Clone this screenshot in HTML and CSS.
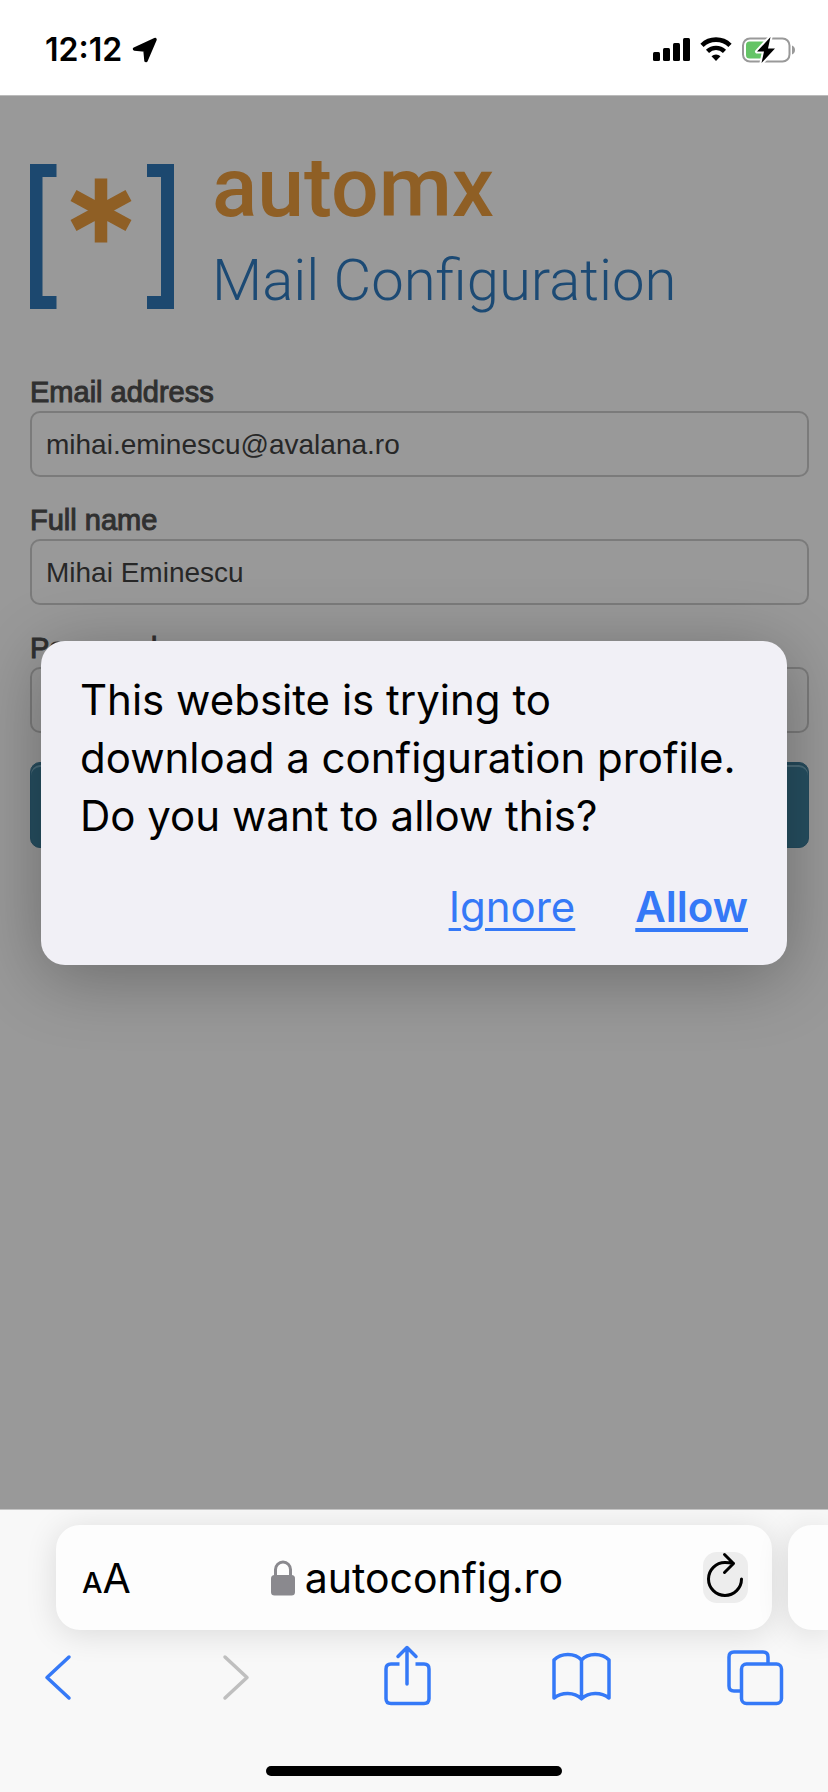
FILE: index.html
```html
<!DOCTYPE html>
<html lang="en">
<head>
<meta charset="utf-8">
<meta name="viewport" content="width=device-width, initial-scale=1">
<title>automx Mail Configuration</title>
<link rel="stylesheet" href="styles.css">
</head>
<body>
<header class="status">
  <div class="status-left">
    <span class="time">12:12</span>
    <svg class="location" viewBox="0 0 26 26" width="26" height="26" aria-hidden="true"><path d="M2.500 12 23 2.500 14 23.500 13 13Z" fill="#000" stroke="#000" stroke-width="3.500" stroke-linejoin="round"/></svg>
  </div>
  <div class="status-right">
    <svg viewBox="0 0 37 26" width="37" height="26" aria-hidden="true">
      <rect x="0" y="15" width="7" height="9" rx="1.500"/><rect x="10" y="11" width="7" height="13" rx="1.500"/><rect x="20" y="6" width="7" height="18" rx="1.500"/><rect x="30" y="1" width="7" height="23" rx="1.500"/>
    </svg>
    <svg viewBox="0 0 32 26" width="32" height="26" aria-hidden="true">
      <path d="M2 8.300a20 20 0 0 1 28 0" fill="none" stroke="#000" stroke-width="4.600"/>
      <path d="M7.500 14.300a12.200 12.200 0 0 1 17 0" fill="none" stroke="#000" stroke-width="4.400"/>
      <path d="M11.500 19.200a6.500 6.500 0 0 1 9 0L16 24Z"/>
    </svg>
    <svg viewBox="0 0 54 26" width="54" height="26" aria-hidden="true">
      <rect x="1" y="1.500" width="46.500" height="23" rx="7" fill="none" stroke="#999" stroke-width="2"/>
      <path d="M50 8.500c4 1.500 4 7.500 0 9Z" fill="#999"/>
      <rect x="4" y="4.500" width="20" height="17" rx="3.500" fill="#65c466"/>
      <path d="M28.500 0 15 14.500h7L19.500 26 33 11.500h-7Z" fill="#000" stroke="#fff" stroke-width="4" paint-order="stroke" stroke-linejoin="round"/>
    </svg>
  </div>
</header>

<main class="page">
  <div class="brand">
    <svg class="brand-mark" viewBox="0 0 144 145" width="144" height="145" aria-hidden="true">
      <path d="M0 0h26.500v13H12.500v119h14v13H0ZM144 0h-27v13h14v119h-14v13h27Z" fill="#1c486f"/>
      <path d="M71 14.500v64M43.500 31.500l55 30M98.500 31.500l-55 30" fill="none" stroke="#8f5f25" stroke-width="12.500"/>
    </svg>
    <div class="brand-text">
      <span class="brand-name">automx</span>
      <span class="brand-sub">Mail Configuration</span>
    </div>
  </div>
  <form class="form">
    <div class="field">
      <label for="email">Email address</label>
      <input id="email" type="text" value="mihai.eminescu@avalana.ro">
    </div>
    <div class="field">
      <label for="name">Full name</label>
      <input id="name" type="text" value="Mihai Eminescu">
    </div>
    <div class="field">
      <label for="password">Password</label>
      <input id="password" type="password">
    </div>
    <button class="submit" type="button" aria-label="Submit"></button>
  </form>

  <div class="overlay">
    <div class="dialog" role="dialog" aria-labelledby="message">
      <p id="message" class="message">This website is trying to download a configuration profile. Do you want to allow this?</p>
      <div class="actions">
        <a href="#ignore">Ignore</a>
        <a class="primary" href="#allow">Allow</a>
      </div>
    </div>
  </div>
</main>

<footer class="browser">
  <div class="tabs">
    <div class="address">
      <button class="reader" type="button" aria-label="Page settings"><span class="small-a">A</span><span class="large-a">A</span></button>
      <div class="url">
        <svg viewBox="0 0 24 36" width="24" height="36" aria-hidden="true"><path d="M4.500 17V9.500a7.500 7.500 0 0 1 15 0V17" fill="none" stroke="#8a898e" stroke-width="3"/><rect y="15" width="24" height="20.500" rx="3.500" fill="#8a898e"/></svg>
        <span>autoconfig.ro</span>
      </div>
      <button class="reload" type="button" aria-label="Reload">
        <svg viewBox="0 0 45 51" width="45" height="51" fill="none" stroke="#000" stroke-width="3" stroke-linecap="round" stroke-linejoin="round" aria-hidden="true"><path d="M38.500 27A16.500 16.500 0 1 1 22 10.500q4 0 8.500 1M21.500 2.500l9 9-9 9"/></svg>
      </button>
    </div>
    <div class="next-tab"></div>
  </div>
  <nav class="toolbar">
    <button type="button" aria-label="Back"><svg viewBox="0 0 64 64" width="64" height="64"><path d="M44 14 22 34.500 44 55"/></svg></button>
    <button class="inactive" type="button" aria-label="Forward"><svg viewBox="0 0 64 64" width="64" height="64"><path d="M25 14 47 34.500 25 55"/></svg></button>
    <button type="button" aria-label="Share"><svg viewBox="0 0 64 64" width="64" height="64"><path d="M33 41V5M24 13.500 33 4.500l9 9"/><path stroke-linecap="butt" d="M25.500 21H17q-5 0-5 5v29.500q0 5 5 5h33q5 0 5-5V26q0-5-5-5h-8.500"/></svg></button>
    <button type="button" aria-label="Bookmarks"><svg viewBox="0 0 64 64" width="64" height="64"><path d="M32.500 17C26 9.500 12 9.500 5 17v38c8-6 20-6 27.500.8C40 49 52 49 60 55V17C53 9.500 39 9.500 32.500 17v38.800"/></svg></button>
    <button type="button" aria-label="Tabs"><svg viewBox="0 0 64 64" width="64" height="64"><rect x="18.500" y="21" width="40" height="39.500" rx="5"/><path stroke-linecap="butt" d="M45 21v-7q0-5-5-5H11q-5 0-5 5v29q0 5 5 5h7.500"/></svg></button>
  </nav>
  <div class="home-indicator"></div>
</footer>
</body>
</html>
```
FILE: styles.css
```css
* {
  box-sizing: border-box;
}

body {
  margin: 0;
  min-height: 100vh;
  display: flex;
  flex-direction: column;
  background: #fff;
  color: #000;
  font-family: Inter, "Liberation Sans", sans-serif;
}

button {
  border: 0;
  padding: 0;
  background: none;
  color: inherit;
  font: inherit;
}

svg {
  display: block;
}

.status {
  height: 96px;
  padding: 4px 32px 0 45px;
  display: flex;
  align-items: center;
  justify-content: space-between;
  border-bottom: 1px solid #bbb;
}

.status-left,
.status-right {
  display: flex;
  align-items: center;
  gap: 10px;
}

.time {
  font-size: 32px;
  line-height: 40px;
  font-weight: 600;
}

.page {
  position: relative;
  flex: 1;
  padding: 51px 19px 60px 30px;
  overflow: hidden;
  background: #999;
}

.brand {
  display: flex;
  align-items: center;
  gap: 38px;
  height: 178px;
}

.brand-text {
  display: flex;
  flex-direction: column;
  gap: 18px;
  padding-bottom: 6px;
  font-family: Roboto, sans-serif;
  white-space: nowrap;
}

.brand-name {
  font-size: 84px;
  line-height: 76px;
  font-weight: 500;
  color: #8f5f25;
}

.brand-sub {
  font-size: 58px;
  line-height: 72px;
  font-weight: 300;
  color: #1c4a74;
}

.form {
  margin-top: 53px;
  display: flex;
  flex-direction: column;
  gap: 29px;
  font-family: "Liberation Sans", sans-serif;
}

.field {
  display: flex;
  flex-direction: column;
  gap: 4px;
}

.field label {
  font-size: 29px;
  line-height: 29px;
  color: #303030;
  -webkit-text-stroke: 1px #303030;
}

.field input {
  width: 100%;
  height: 66px;
  padding: 2px 14px 0;
  border: 2px solid #7b7b7b;
  border-radius: 10px;
  background: transparent;
  color: #272727;
  font-family: inherit;
  font-size: 28px;
}

.submit {
  height: 86px;
  border: 1px solid #244b5e;
  border-radius: 10px;
  background: #264f61;
  box-shadow: inset 0 2px 0 #24495a, inset 0 4px 0 #4b6c7a;
}

.overlay {
  position: absolute;
  inset: 0;
  display: flex;
  align-items: center;
  padding: 0 41px;
}

.dialog {
  width: 100%;
  padding: 30px 39px 29px 39px;
  border-radius: 24px;
  background: #f1f0f6;
  box-shadow: 0 12px 70px rgba(0, 0, 0, 0.3);
}

.message {
  margin: 0 0 33px;
  font-size: 42px;
  line-height: 58px;
}

.actions {
  display: flex;
  justify-content: flex-end;
  gap: 60px;
  font-size: 42px;
  line-height: 58px;
}

.actions a {
  color: #3579f7;
  text-decoration-thickness: 3px;
  text-underline-offset: 6px;
}

.actions .primary {
  font-weight: 600;
  text-decoration-thickness: 4px;
}

.browser {
  padding: 15px 0 16px;
  border-top: 1px solid #c4c4c4;
  background: #f8f8f8;
  overflow: hidden;
}

.tabs {
  display: flex;
  gap: 16px;
  padding-left: 56px;
}

.address,
.next-tab {
  height: 105px;
  background: #fdfdfd;
  box-shadow: 0 4px 32px rgba(0, 0, 0, 0.12);
}

.address {
  flex: 1;
  display: flex;
  align-items: center;
  justify-content: space-between;
  padding: 0 24px 0 26px;
  border-radius: 24px;
}

.next-tab {
  width: 40px;
  border-radius: 24px 0 0 24px;
}

.reader {
  display: flex;
  align-items: baseline;
  padding-top: 6px;
  line-height: 52px;
}

.small-a {
  font-size: 29px;
  font-weight: 500;
}

.large-a {
  font-size: 41px;
}

.url {
  display: flex;
  align-items: center;
  gap: 10px;
  font-size: 41px;
  line-height: 52px;
}

.reload {
  border-radius: 14px;
  background: #ededed;
}

.toolbar {
  display: flex;
  justify-content: space-between;
  padding: 13px 41px 0 25px;
}

.toolbar svg {
  fill: none;
  stroke: #3579f7;
  stroke-width: 3.5;
  stroke-linecap: round;
  stroke-linejoin: round;
}

.toolbar .inactive svg {
  stroke: #bfbfbf;
}

.home-indicator {
  width: 296px;
  height: 10px;
  margin: 59px auto 0;
  border-radius: 5px;
  background: #000;
}
```
